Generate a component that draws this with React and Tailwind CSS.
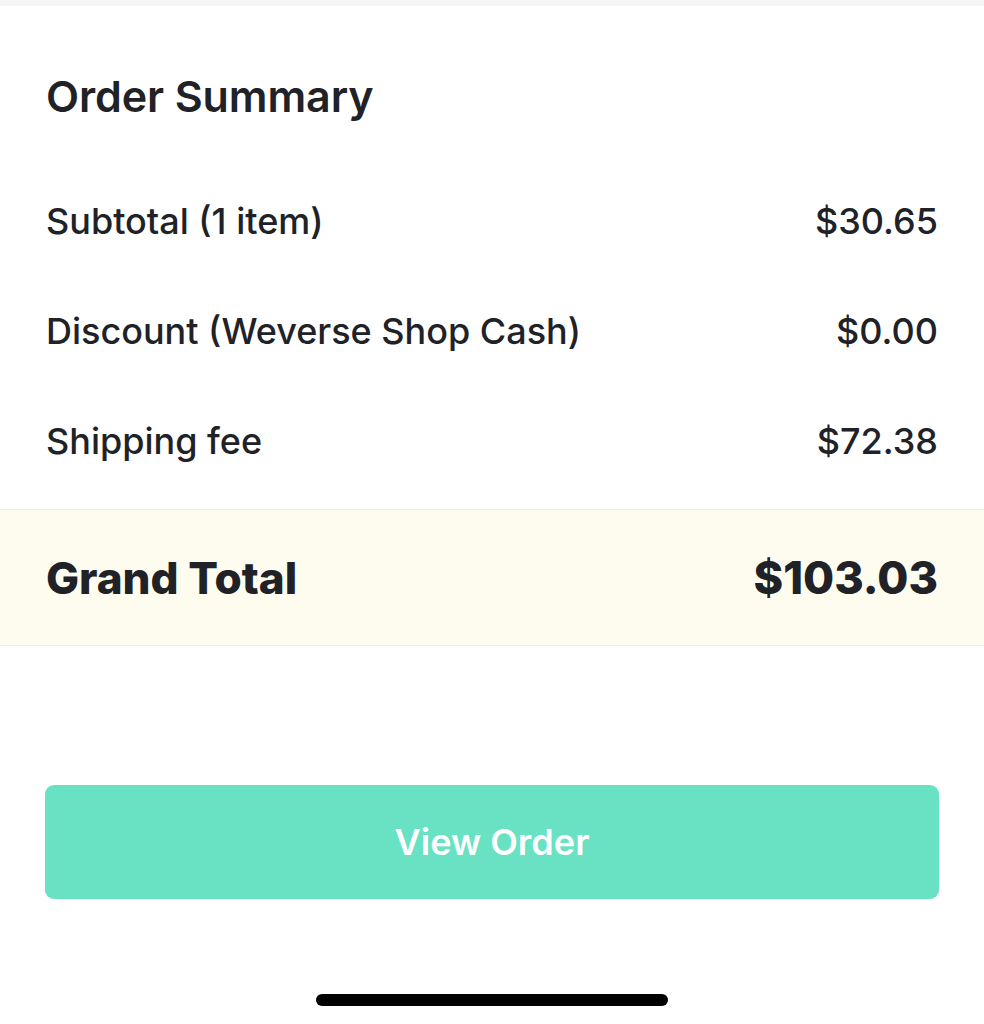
export default function App() {
  const rows = [
    { label: 'Subtotal (1 item)', value: '$30.65' },
    { label: 'Discount (Weverse Shop Cash)', value: '$0.00' },
    { label: 'Shipping fee', value: '$72.38' }
  ];

  return (
    <div
      className="w-[984px] h-[1024px] bg-white flex flex-col text-[#202227]"
      style={{ fontFamily: 'Inter, "Noto Sans", sans-serif' }}
    >
      <div className="h-[6px] bg-[#f5f6f8]" />

      <h1 className="px-[46px] pt-[64px] text-[43px] leading-[52px] font-semibold tracking-[-0.1px]">
        Order Summary
      </h1>

      <div className="pt-[44px] flex flex-col">
        {rows.map((row) => (
          <div key={row.label} className="px-[46px] h-[110px] flex items-center justify-between text-[36px] font-medium">
            <span>{row.label}</span>
            <span>{row.value}</span>
          </div>
        ))}
      </div>

      <div className="mt-[13px] h-[137px] bg-[#fdfcee] border-y border-[#f0eedd] px-[46px] flex items-center justify-between font-extrabold">
        <span className="text-[44px]">Grand Total</span>
        <span className="text-[45px]">$103.03</span>
      </div>

      <div className="px-[45px] pt-[139px]">
        <button className="w-full h-[114px] rounded-[9px] bg-[#69e2c3] text-white text-[36px] font-semibold">
          View Order
        </button>
      </div>

      <div className="flex-1 flex items-end justify-center pb-[18px]">
        <div className="w-[352px] h-[12px] rounded-full bg-black" />
      </div>
    </div>
  );
}
